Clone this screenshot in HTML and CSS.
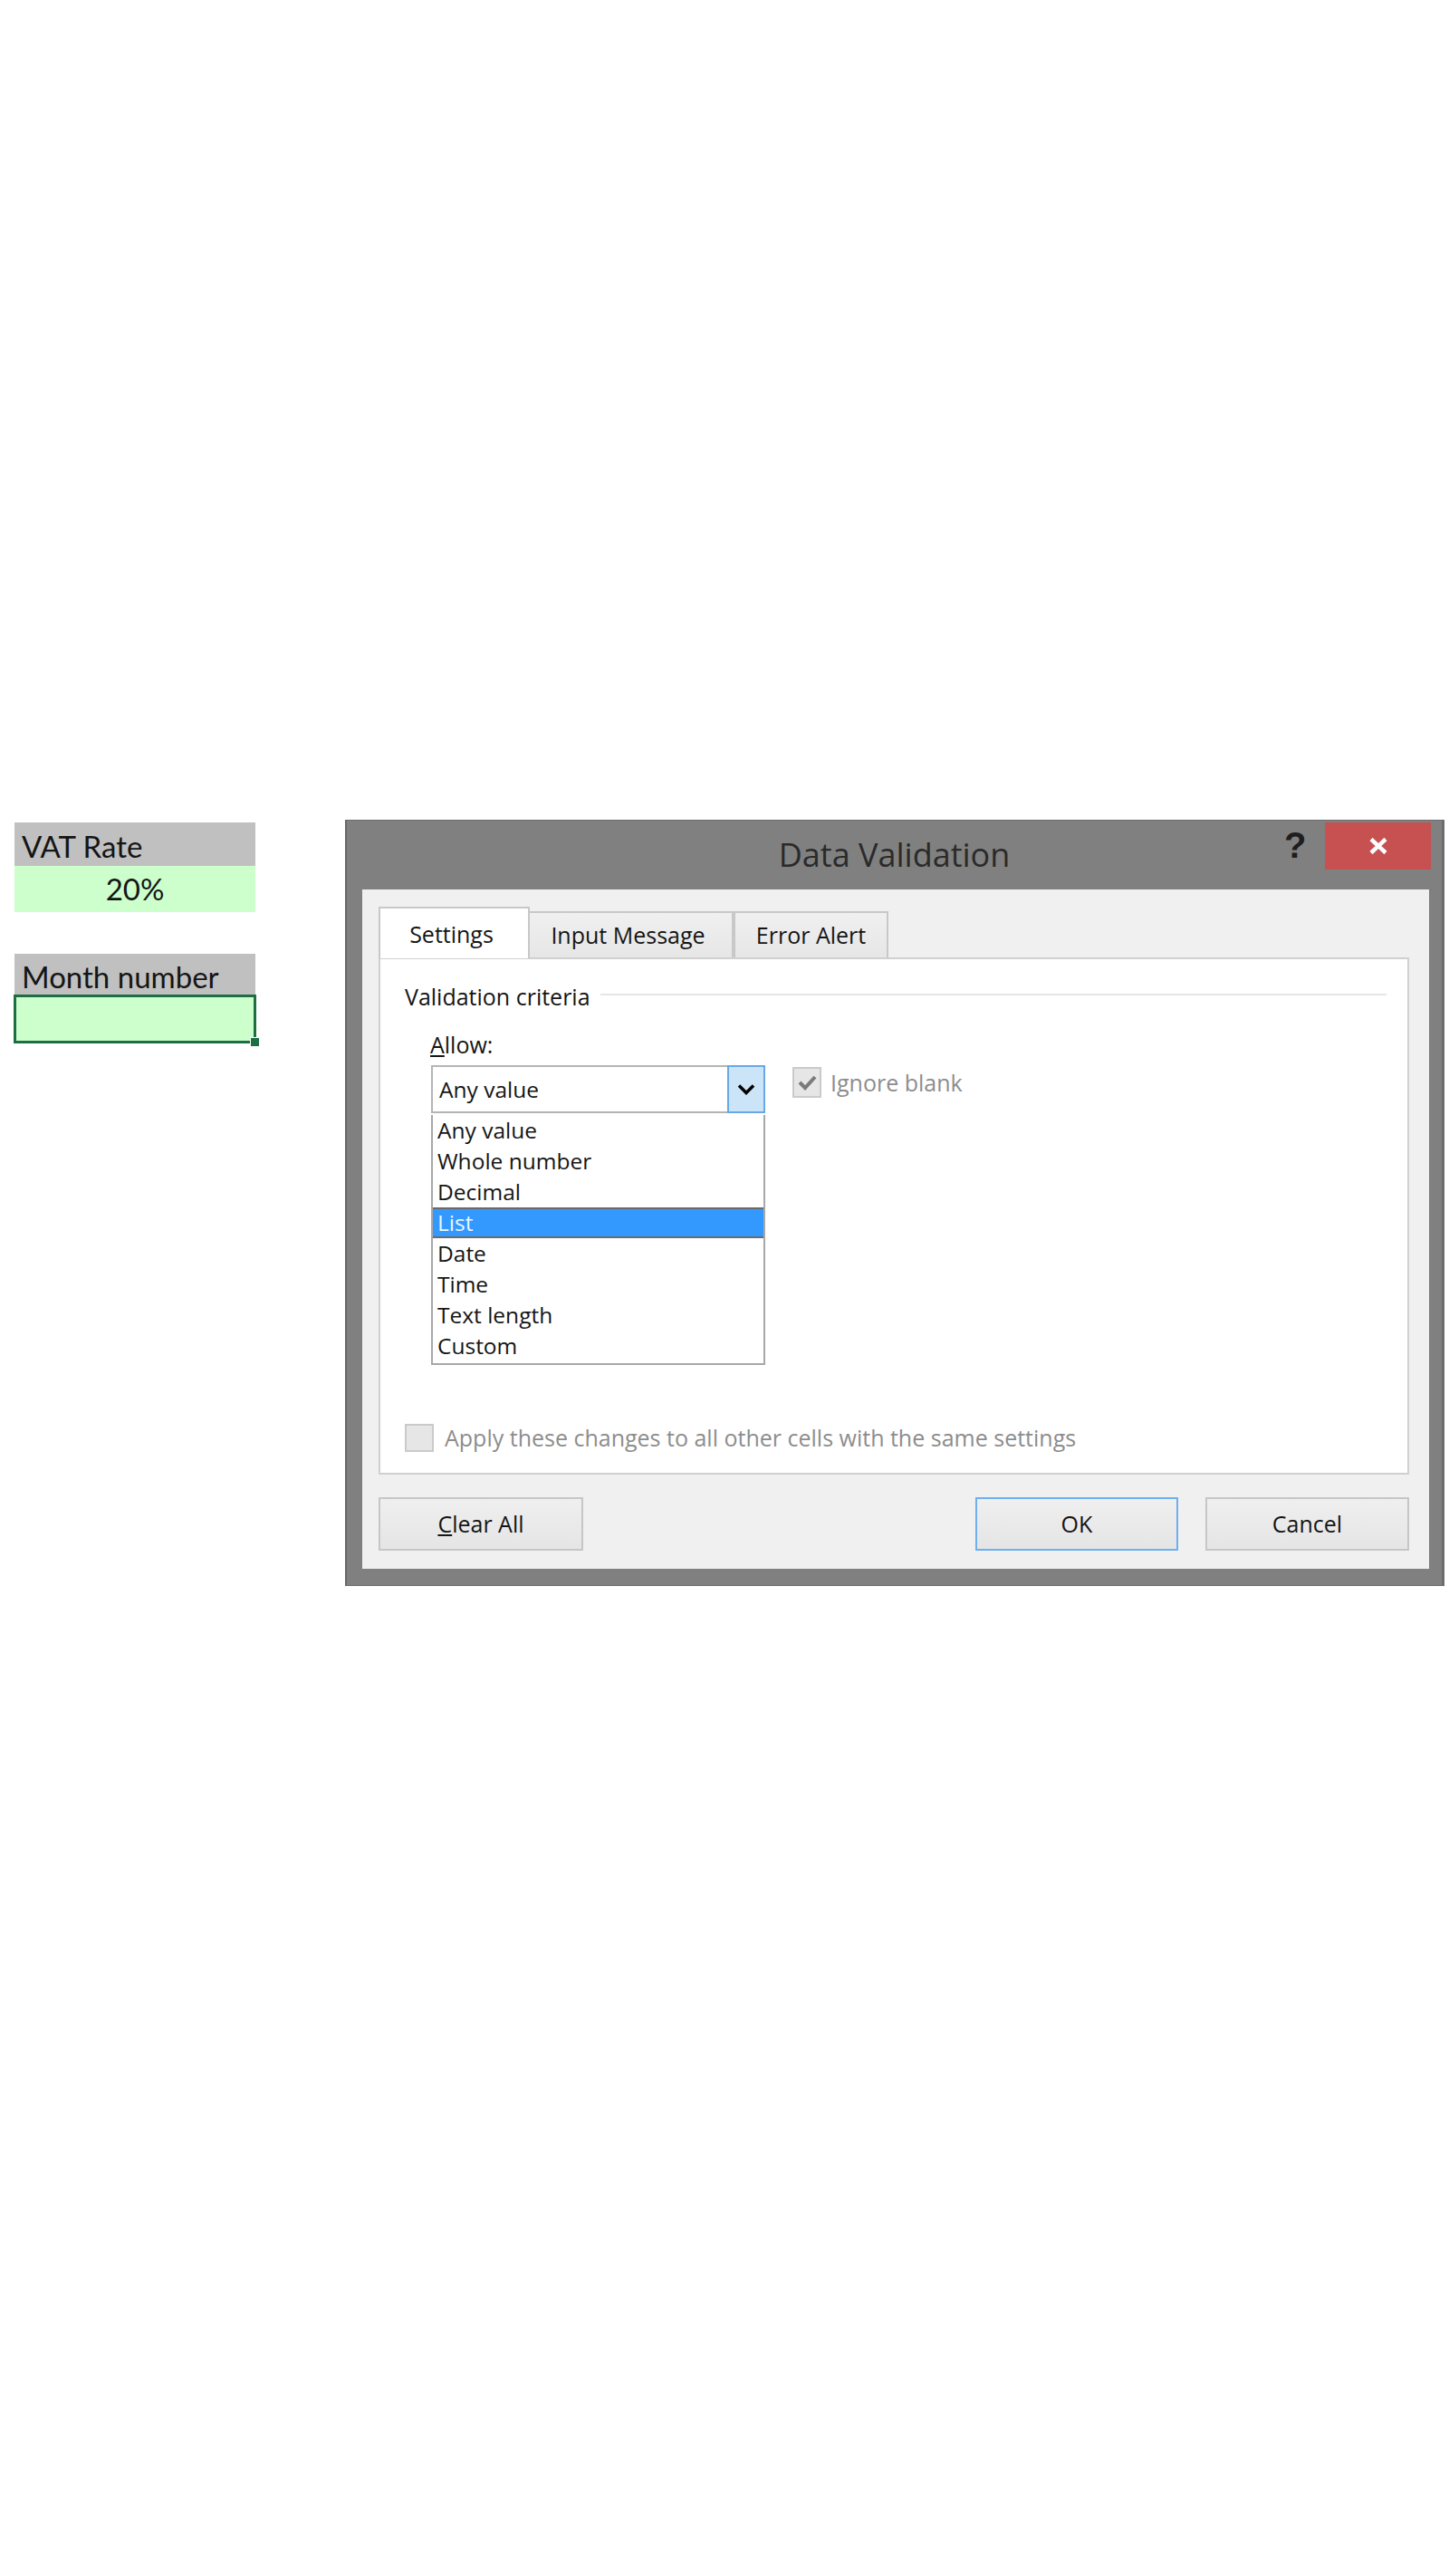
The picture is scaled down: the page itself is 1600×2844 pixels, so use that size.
FILE: index.html
```html
<!DOCTYPE html>
<html lang="en">
<head>
<meta charset="utf-8">
<title>Data Validation</title>
<link rel="stylesheet" href="styles.css">
</head>
<body>
<div class="page">
  <div class="sheet">
    <div class="cell hdr">VAT Rate</div>
    <div class="cell val">20%</div>
    <div class="cell hdr hdr2">Month number</div>
    <div class="cell val sel"><span class="handle"></span></div>
  </div>

  <div class="dialog">
    <div class="titlebar">
      <div class="title">Data Validation</div>
      <div class="help">?</div>
      <div class="close">
        <svg width="24" height="20" viewBox="0 0 24 20"><path d="M4 2.5 L20 17.5 M20 2.5 L4 17.5" stroke="#fff" stroke-width="4.5"/></svg>
      </div>
    </div>
    <div class="panel">
      <div class="tabs">
        <div class="tab active">Settings</div>
        <div class="tab">Input Message</div>
        <div class="tab">Error Alert</div>
      </div>
      <div class="content">
        <div class="group-head">
          <span class="group-title">Validation criteria</span>
          <span class="group-line"></span>
        </div>
        <div class="allow">
          <div class="label"><u>A</u>llow:</div>
          <div class="combo-row">
            <div class="combo-wrap">
              <div class="combo">
                <span class="combo-text">Any value</span>
                <span class="combo-btn">
                  <svg width="20" height="12" viewBox="0 0 20 12"><path d="M2 1.5 L10 9.5 L18 1.5" fill="none" stroke="#000" stroke-width="3.5"/></svg>
                </span>
              </div>
              <ul class="list">
                <li>Any value</li>
                <li>Whole number</li>
                <li>Decimal</li>
                <li class="selected">List</li>
                <li>Date</li>
                <li>Time</li>
                <li>Text length</li>
                <li>Custom</li>
              </ul>
            </div>
            <div class="check-item">
              <span class="box checked">
                <svg width="24" height="20" viewBox="0 0 24 20"><path d="M4 10 L10 16 L21 4" fill="none" stroke="#7a7a7a" stroke-width="4"/></svg>
              </span>
              <span class="disabled-text">Ignore blank</span>
            </div>
          </div>
        </div>
        <div class="apply">
          <span class="box"></span>
          <span class="disabled-text">Apply these changes to all other cells with the same settings</span>
        </div>
      </div>
      <div class="buttons">
        <div class="btn clear"><u>C</u>lear All</div>
        <div class="spacer"></div>
        <div class="btn ok">OK</div>
        <div class="btn cancel">Cancel</div>
      </div>
    </div>
  </div>
</div>
</body>
</html>
```
FILE: styles.css
```css
html, body {
  margin: 0;
  padding: 0;
  background: #ffffff;
}
body {
  width: 1600px;
  height: 2844px;
  font-family: "Open Sans", "Noto Sans", sans-serif;
  color: #000;
}
.page {
  display: flex;
  align-items: flex-start;
  padding: 905px 0 0 16px;
}

/* spreadsheet cells */
.sheet {
  width: 266px;
  margin-top: 3px;
  font-family: Lato, "Open Sans", sans-serif;
  font-size: 33px;
}
.cell {
  box-sizing: border-box;
  width: 266px;
}
.hdr {
  background: #c0c0c0;
  height: 48px;
  line-height: 52px;
  padding-left: 8px;
  color: #151515;
}
.hdr2 {
  margin-top: 46px;
  height: 45px;
  line-height: 50px;
}
.val {
  background: #ccffcc;
  height: 51px;
  line-height: 50px;
  text-align: center;
  color: #151515;
}
.val.sel {
  position: relative;
  width: 268px;
  margin-left: -1px;
  height: 54px;
  border: 3px solid #1e6e43;
}
.handle {
  position: absolute;
  right: -7px;
  bottom: -7px;
  width: 9px;
  height: 9px;
  background: #1e6e43;
  border: 1px solid #ffffff;
}

/* dialog */
.dialog {
  margin-left: 99px;
  width: 1214px;
  box-sizing: border-box;
  background: #808080;
  border: 1px solid #6c6c6c;
  border-left: 2px solid #686868;
  border-right: 3px solid #6c6c6c;
  padding-bottom: 18px;
}
.titlebar {
  height: 76px;
  display: flex;
  align-items: flex-start;
}
.title {
  flex: 1;
  text-align: center;
  padding-left: 174px;
  font-size: 36px;
  line-height: 76px;
  color: #2a2a2a;
}
.help {
  width: 45px;
  margin-top: 7px;
  font-size: 40px;
  line-height: 40px;
  font-weight: bold;
  color: #1e1e1e;
  font-family: "Liberation Sans", sans-serif;
}
.close {
  margin-top: 2px;
  margin-right: 12px;
  width: 117px;
  height: 52px;
  background: #c75050;
  display: flex;
  align-items: center;
  justify-content: center;
}

.panel {
  margin: 0 14px 0 17px;
  background: #f0f0f0;
  padding: 19px 22px 20px 18px;
}
.tabs {
  display: flex;
  align-items: flex-end;
  height: 56px;
  font-size: 25px;
}
.tab {
  box-sizing: border-box;
  height: 51px;
  line-height: 48px;
  border: 2px solid #c8c8c8;
  border-bottom: none;
  background: linear-gradient(#f0f0f0, #e6e6e6);
  color: #151515;
  text-align: center;
}
.tab:nth-child(2) { width: 225px; border-left: none; padding-right: 6px; }
.tab:nth-child(3) { width: 171px; border-left: 2px solid #c8c8c8; }
.tab.active {
  width: 167px;
  height: 57px;
  line-height: 56px;
  margin-bottom: -1px;
  background: #ffffff;
  position: relative;
  z-index: 1;
  padding-right: 6px;
}
.content {
  box-sizing: border-box;
  height: 571px;
  background: #ffffff;
  border: 2px solid #d0d0d0;
  padding: 26px 23px 0 27px;
  font-size: 25px;
}
.group-head {
  display: flex;
  align-items: center;
  height: 30px;
}
.group-title {
  line-height: 30px;
  color: #151515;
}
.group-line {
  flex: 1;
  height: 2px;
  background: #e6e6e6;
  margin-left: 11px;
  margin-top: -4px;
}
.allow {
  margin-left: 28px;
}
.label {
  margin-top: 23px;
  line-height: 30px;
  height: 30px;
  color: #151515;
}
.combo-row {
  display: flex;
  align-items: flex-start;
  margin-top: 8px;
}
.combo-wrap {
  width: 369px;
  margin-left: 1px;
}
.combo {
  box-sizing: border-box;
  height: 53px;
  border: 2px solid #b4b4b4;
  display: flex;
  align-items: stretch;
  background: #ffffff;
  font-size: 24.5px;
}
.combo-text {
  flex: 1;
  padding-left: 7px;
  line-height: 49px;
  color: #151515;
}
.combo-btn {
  width: 42px;
  margin: -2px -2px -2px 0;
  box-sizing: border-box;
  border: 2px solid #67a8e6;
  background: #cce4f7;
  display: flex;
  align-items: center;
  justify-content: center;
}
.list {
  list-style: none;
  margin: 0;
  padding: 0;
  box-sizing: border-box;
  height: 276px;
  border: 2px solid #a8a8a8;
  border-top: none;
  background: #ffffff;
  font-size: 24.5px;
}
.list li {
  height: 34px;
  line-height: 33px;
  padding-left: 5px;
  color: #151515;
  box-sizing: border-box;
}
.list li:first-child { margin-top: 2px; }
.list li.selected {
  background: #3399ff;
  color: #eef5ff;
  border-top: 2px solid #6a6a6a;
  border-bottom: 2px solid #6a6a6a;
  line-height: 29px;
}
.check-item {
  display: flex;
  align-items: center;
  margin-left: 30px;
  margin-top: 2px;
}
.box {
  box-sizing: border-box;
  width: 32px;
  height: 34px;
  background: #e6e6e6;
  border: 2px solid #cacaca;
  display: flex;
  align-items: center;
  justify-content: center;
}
.disabled-text {
  color: #8d8d8d;
  margin-left: 10px;
  font-size: 25px;
}
.apply {
  display: flex;
  align-items: center;
  margin-top: 63px;
}
.apply .box {
  width: 32px;
  height: 31px;
}
.apply .disabled-text { margin-left: 12px; }

.buttons {
  display: flex;
  margin-top: 25px;
  font-size: 25px;
}
.spacer { flex: 1; }
.btn {
  box-sizing: border-box;
  height: 59px;
  line-height: 55px;
  text-align: center;
  background: linear-gradient(#efefef, #e5e5e5);
  border: 2px solid #c6c6c6;
  color: #151515;
}
.btn.clear { width: 226px; }
.btn.ok { width: 224px; border-color: #6cb0f0; }
.btn.cancel { width: 225px; margin-left: 30px; }
```
